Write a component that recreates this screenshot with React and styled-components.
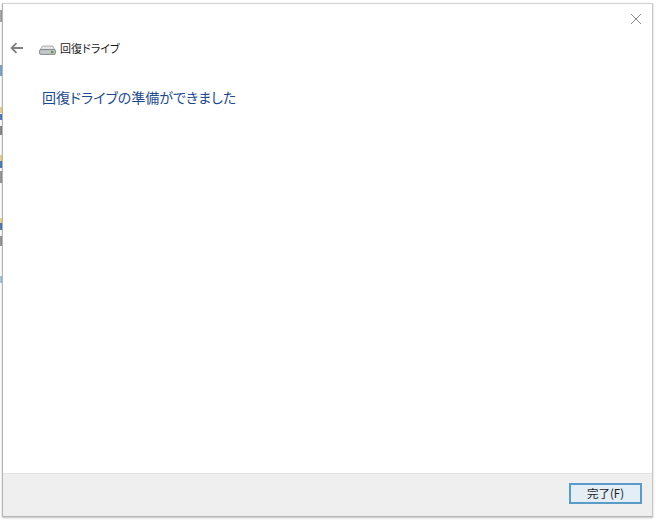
import React from 'react'
import styled, { createGlobalStyle } from 'styled-components'

const Global = createGlobalStyle`
html,body{
margin:0;
padding:0;
background:#fff;
}
#root{
width:656px;
height:520px;
overflow:hidden;
}
`

const Desktop = styled.div`
width:656px;
height:520px;
box-sizing:border-box;
display:flex;
padding:3px 3px 3px 0;
background:#fff;
`

const BehindStrip = styled.div`
width:2px;
flex:none;
display:flex;
flex-direction:column;
`

const Scrap = styled.div`
height:${({h})=>h}px;
margin-top:${({top})=>top}px;
background:${({color})=>color};
`

const Dialog = styled.div`
flex:1;
display:flex;
flex-direction:column;
background:#fff;
border:1px solid #b4b4b4;
border-top-color:#d2d2d2;
border-right-color:#c8c8c8;
box-shadow:0 1px 2px rgba(0,0,0,.25);
font-family:"Noto Sans CJK JP","Liberation Sans",sans-serif;
font-feature-settings:"palt";
`

const TitleBar = styled.div`
height:28px;
display:flex;
justify-content:flex-end;
align-items:center;
padding-right:10px;
`

const CloseIcon = styled.svg`
width:12px;
height:12px;
margin-top:1px;
`

const NavRow = styled.div`
height:32px;
display:flex;
align-items:center;
padding-left:7px;
`

const BackIcon = styled.svg`
width:14px;
height:12px;
margin-right:15px;
`

const DriveIcon = styled.svg`
width:17px;
height:10px;
margin-right:4px;
margin-top:4px;
`

const NavTitle = styled.div`
font-size:11px;
color:#1a1a1a;
line-height:14px;
white-space:nowrap;
`

const Content = styled.div`
flex:1;
padding:23px 0 0 39px;
`

const Heading = styled.div`
font-size:14px;
line-height:20px;
color:#1c4a8c;
white-space:nowrap;
`

const Footer = styled.div`
height:43px;
display:flex;
justify-content:flex-end;
align-items:center;
padding:0 10px 3px 0;
box-sizing:border-box;
background:#efefef;
border-top:1px solid #e2e2e2;
`

const FinishButton = styled.button`
width:73px;
height:21px;
padding:0;
background:#e3eef7;
border:2px solid #5a9cc8;
color:#222;
font-family:"Noto Sans CJK JP","Liberation Sans",sans-serif;
font-size:11.5px;
line-height:15px;
`

export default function App(){
    return (
        <>
            <Global/>
            <Desktop>
                <BehindStrip>
                    <Scrap top={7} h={12} color="#a8a8a8"/>
                    <Scrap top={43} h={11} color="#7fa6cf"/>
                    <Scrap top={31} h={6} color="#f2d38a"/>
                    <Scrap top={1} h={6} color="#4a80bd"/>
                    <Scrap top={6} h={9} color="#8a8a8a"/>
                    <Scrap top={20} h={6} color="#f2d38a"/>
                    <Scrap top={0} h={7} color="#4a80bd"/>
                    <Scrap top={3} h={12} color="#9a9a9a"/>
                    <Scrap top={35} h={5} color="#f2d38a"/>
                    <Scrap top={0} h={7} color="#4a80bd"/>
                    <Scrap top={6} h={10} color="#9a9a9a"/>
                    <Scrap top={30} h={7} color="#a5c8e4"/>
                </BehindStrip>
                <Dialog>
                    <TitleBar>
                        <CloseIcon viewBox="0 0 12 12">
                            <path d="M1 1L11 11M11 1L1 11" stroke="#8a8a8a" strokeWidth="1" fill="none"/>
                        </CloseIcon>
                    </TitleBar>
                    <NavRow>
                        <BackIcon viewBox="0 0 14 12">
                            <path d="M13 6H2M6.5 1.2L1.6 6l4.9 4.8" stroke="#7f7f7f" strokeWidth="1.8" fill="none"/>
                        </BackIcon>
                        <DriveIcon viewBox="0 0 17 10">
                            <path d="M3.5 1H13.5L16 5H1Z" fill="#e4e4e4" stroke="#9a9a9a" strokeWidth=".8"/>
                            <rect x=".6" y="4.6" width="15.8" height="4.8" rx="1.2" fill="#c4c7c9" stroke="#6f7478" strokeWidth=".8"/>
                            <rect x="12" y="6" width="2.4" height="2" fill="#4f9a4a"/>
                        </DriveIcon>
                        <NavTitle>回復ドライブ</NavTitle>
                    </NavRow>
                    <Content>
                        <Heading>回復ドライブの準備ができました</Heading>
                    </Content>
                    <Footer>
                        <FinishButton>完了(F)</FinishButton>
                    </Footer>
                </Dialog>
            </Desktop>
        </>
    )
}
